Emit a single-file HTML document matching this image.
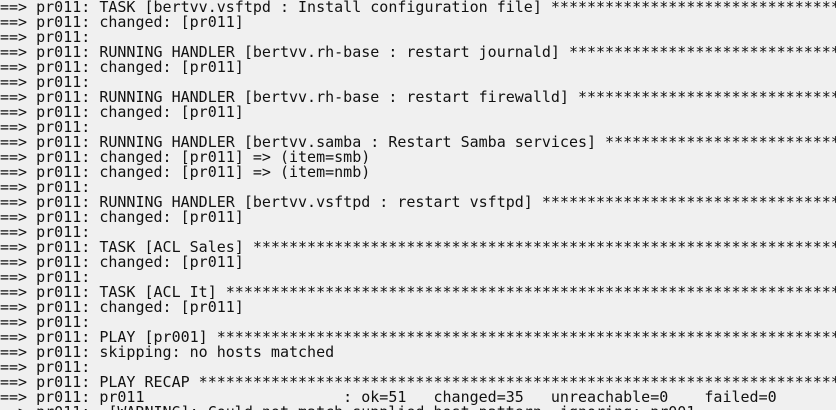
<!DOCTYPE html>
<html><head><meta charset="utf-8"><style>
html,body{margin:0;padding:0;background:#f0f0f0;width:836px;height:410px;overflow:hidden}
pre{margin:0;padding:0 0 0 0;font-family:"DejaVu Sans Mono","Liberation Mono",monospace;font-size:15px;line-height:15px;color:#111;white-space:pre;overflow:hidden;width:836px}
</style></head><body><pre>==> pr011: TASK [bertvv.vsftpd : Install configuration file] ***********************************************
==> pr011: changed: [pr011]
==> pr011:
==> pr011: RUNNING HANDLER [bertvv.rh-base : restart journald] ***********************************************
==> pr011: changed: [pr011]
==> pr011:
==> pr011: RUNNING HANDLER [bertvv.rh-base : restart firewalld] **********************************************
==> pr011: changed: [pr011]
==> pr011:
==> pr011: RUNNING HANDLER [bertvv.samba : Restart Samba services] ********************************************
==> pr011: changed: [pr011] => (item=smb)
==> pr011: changed: [pr011] => (item=nmb)
==> pr011:
==> pr011: RUNNING HANDLER [bertvv.vsftpd : restart vsftpd] **************************************************
==> pr011: changed: [pr011]
==> pr011:
==> pr011: TASK [ACL Sales] ***************************************************************************************
==> pr011: changed: [pr011]
==> pr011:
==> pr011: TASK [ACL It] ******************************************************************************************
==> pr011: changed: [pr011]
==> pr011:
==> pr011: PLAY [pr001] *******************************************************************************************
==> pr011: skipping: no hosts matched
==> pr011:
==> pr011: PLAY RECAP *********************************************************************************************
==> pr011: pr011                      : ok=51   changed=35   unreachable=0    failed=0
==> pr011:  [WARNING]: Could not match supplied host pattern, ignoring: pr001
</pre></body></html>
